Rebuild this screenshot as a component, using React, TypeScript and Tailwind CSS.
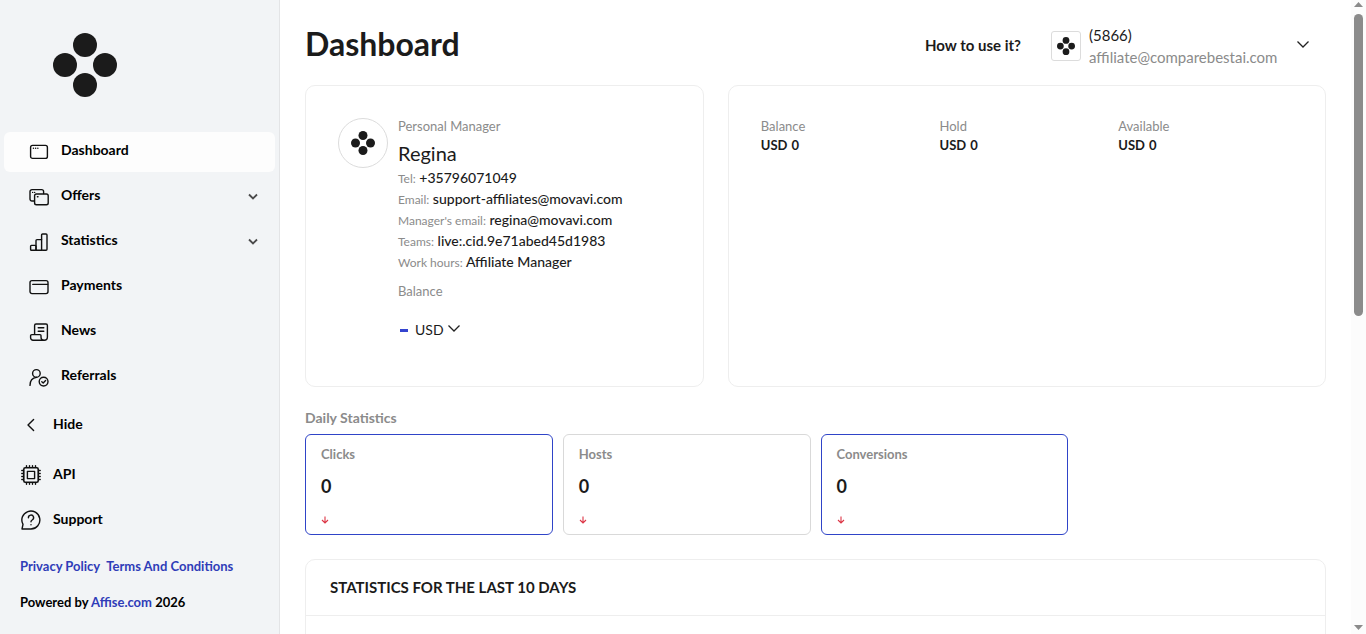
import React from 'react';

interface NavItem {
  label: string;
  icon: React.ReactNode;
  active?: boolean;
  expandable?: boolean;
}

interface StatCard {
  label: string;
  value: number;
  selected: boolean;
}

const Icon: React.FC<{ children: React.ReactNode }> = ({ children }) => (
  <svg
    width="20"
    height="20"
    viewBox="0 0 20 20"
    fill="none"
    stroke="#111111"
    strokeWidth="1.4"
    strokeLinecap="round"
    strokeLinejoin="round"
    aria-hidden="true"
    className="shrink-0"
  >
    {children}
  </svg>
);

const navItems: NavItem[] = [
  {
    label: 'Dashboard',
    active: true,
    icon: (
      <>
        <rect x="1.6" y="3.4" width="16.8" height="13" rx="2" />
        <path d="M4.4 6.2h.1M6.6 6.2h.1M8.8 6.2h.1" />
      </>
    ),
  },
  {
    label: 'Offers',
    expandable: true,
    icon: (
      <>
        <path d="M5.2 14H3a2 2 0 0 1-2-2V4.6a2 2 0 0 1 2-2h9.600a2 2 0 0 1 2 2v2" />
        <rect x="5.6" y="7" width="13.600" height="10.800" rx="1.8" />
        <path d="M3.6 5.400h.1M5.6 5.400h.1M8.400 9.8h.6" />
      </>
    ),
  },
  {
    label: 'Statistics',
    expandable: true,
    icon: (
      <>
        <rect x="1.6" y="13.4" width="5.4" height="4.8" rx=".8" />
        <path d="M7 18.2V8.6a1 1 0 0 1 1-1h4.6M7 18.2h5.6" />
        <rect x="12.6" y="2" width="5.4" height="16.2" rx="1" />
      </>
    ),
  },
  {
    label: 'Payments',
    icon: (
      <>
        <rect x="1" y="3.6" width="18" height="13" rx="2" />
        <path d="M3.8 7.4h14.8" />
      </>
    ),
  },
  {
    label: 'News',
    icon: (
      <>
        <path d="M5.6 12.6V3.4A1.4 1.4 0 0 1 7 2h10a1.400 1.400 0 0 1 1.400 1.400V15a3.200 3.200 0 0 1-3.200 3.200H4a2.400 2.400 0 0 1-2.400-2.400v-2a1.200 1.200 0 0 1 1.200-1.200H11a1 1 0 0 1 1 1V15a3.200 3.200 0 0 0 3.200 3.200" />
        <path d="M9.200 5.800h5.600M9.200 9.200h5.600" />
      </>
    ),
  },
  {
    label: 'Referrals',
    icon: (
      <>
        <circle cx="7.400" cy="6.400" r="3.800" />
        <path d="M1 18.400c0-4.600 2.600-7.600 6.600-8" />
        <circle cx="14.600" cy="14.600" r="4.400" />
        <path d="m12.800 14.800 1.400 1.200 2.400-2.400" />
      </>
    ),
  },
];

const contacts = [
  { label: 'Tel:', value: '+35796071049' },
  { label: 'Email:', value: 'support-affiliates@movavi.com' },
  { label: "Manager's email:", value: 'regina@movavi.com' },
  { label: 'Teams:', value: 'live:.cid.9e71abed45d1983' },
  { label: 'Work hours:', value: 'Affiliate Manager' },
];

const balances = ['Balance', 'Hold', 'Available'];

const stats: StatCard[] = [
  { label: 'Clicks', value: 0, selected: true },
  { label: 'Hosts', value: 0, selected: false },
  { label: 'Conversions', value: 0, selected: true },
];

const Logo: React.FC<{ size: number }> = ({ size }) => (
  <svg width={size} height={size} viewBox="0 0 64 64" fill="#1b1b1b" role="img" aria-label="Logo">
    <circle cx="32" cy="12" r="12" />
    <circle cx="12" cy="32" r="12" />
    <circle cx="52" cy="32" r="12" />
    <circle cx="32" cy="52" r="12" />
  </svg>
);

const Chevron: React.FC = () => (
  <svg width="14" height="14" viewBox="0 0 14 14" fill="none" stroke="#222222" strokeWidth="1.3" aria-hidden="true">
    <path d="m1.500 4.500 5.500 5.500 5.500-5.500" />
  </svg>
);

const Sidebar: React.FC = () => (
  <aside className="w-[280px] shrink-0 border-r border-[#e3e4e6] bg-[#f2f4f6] text-black">
    <div className="h-[132px] pl-[53px] pt-[33px]">
      <Logo size={64} />
    </div>

    <nav className="flex flex-col gap-[5px] px-1 text-sm font-bold">
      {navItems.map((item) => (
        <a
          key={item.label}
          href="#"
          className={`flex h-10 items-center rounded-md pb-px pl-[25px] pr-4 ${item.active ? 'bg-[#fdfdfd]' : ''}`}
        >
          <Icon>{item.icon}</Icon>
          <span className="ml-3 flex-1 pb-[3px]">{item.label}</span>
          {item.expandable && (
            <svg width="12" height="12" viewBox="0 0 12 12" fill="none" stroke="#4b4b4b" strokeWidth="1.8" aria-hidden="true">
              <path d="m2 3.500 4 4 4-4" />
            </svg>
          )}
        </a>
      ))}
    </nav>

    <div className="mt-2 flex flex-col pl-[21px] text-sm font-bold">
      <button type="button" className="flex h-10 items-center gap-3 text-left">
        <Icon>
          <path d="M12.600 4.400 7 10l5.600 5.600" />
        </Icon>
        <span className="pb-[2px]">Hide</span>
      </button>
      <a href="#" className="mt-[10px] flex h-10 items-center gap-3">
        <Icon>
          <rect x="2.800" y="2.800" width="14.400" height="14.400" rx="1.400" strokeWidth="1.600" />
          <rect x="6.400" y="6.400" width="7.200" height="7.200" />
          <path d="M5.500 2V.8M8.500 2V.8M11.500 2V.8M14.500 2V.8M5.500 19.200V18M8.500 19.200V18M11.500 19.200V18M14.500 19.200V18M2 5.500H.8M2 8.500H.8M2 11.500H.8M2 14.500H.8M19.200 5.500H18M19.200 8.500H18M19.200 11.500H18M19.200 14.500H18" />
        </Icon>
        <span className="pb-[2px]">API</span>
      </a>
      <a href="#" className="mt-[5px] flex h-10 items-center gap-3">
        <Icon>
          <path d="M1 19l1-4.600A9 9 0 1 1 10 19z" />
          <path d="M7.400 7.800A2.600 2.600 0 1 1 11.200 10c-.8.500-1.200 1-1.200 1.800M10 14.600v.2" />
        </Icon>
        <span className="pb-[2px]">Support</span>
      </a>
    </div>

    <div className="mt-4 pl-5 text-[13px] font-bold leading-5">
      <p className="flex gap-[6px] text-[#2f3cb8]">
        <a href="#">Privacy Policy</a>
        <a href="#">Terms And Conditions</a>
      </p>
      <p className="mt-4">
        Powered by{' '}
        <a href="#" className="text-[#2f3cb8]">
          Affise.com
        </a>{' '}
        2026
      </p>
    </div>
  </aside>
);

const Header: React.FC = () => (
  <header className="flex h-[85px] items-center pt-[6px]">
    <h1 className="flex-1 pb-1 text-[32px] font-bold">Dashboard</h1>
    <a href="#" className="mr-[30px] text-[15px] font-bold">
      How to use it?
    </a>
    <span className="flex size-[30px] items-center justify-center rounded-[3px] border border-[#dcdcdc]">
      <Logo size={18} />
    </span>
    <div className="ml-2 min-w-[196px] text-[15px] leading-[22px]">
      <p>(5866)</p>
      <p className="text-[#8b8b8b]">affiliate@comparebestai.com</p>
    </div>
    <button type="button" aria-label="Account menu" className="ml-[11px] mr-4 pb-1">
      <Chevron />
    </button>
  </header>
);

const ManagerCard: React.FC = () => (
  <section className="flex h-[302px] gap-[10px] rounded-[10px] border border-[#eeeeee] p-8">
    <span className="flex size-[50px] shrink-0 items-center justify-center rounded-full border border-[#dcdcdc]">
      <Logo size={24} />
    </span>
    <div>
      <p className="text-[13px] leading-4 text-[#8b8b8b]">Personal Manager</p>
      <h2 className="mt-[5px] text-xl leading-7">Regina</h2>
      <ul>
        {contacts.map((contact) => (
          <li key={contact.label} className="text-sm font-medium leading-[21px]">
            <span className="text-xs font-normal text-[#8b8b8b]">{contact.label}</span> {contact.value}
          </li>
        ))}
      </ul>
      <p className="mt-[10px] text-[13px] leading-[18px] text-[#8b8b8b]">Balance</p>
      <button type="button" className="mt-5 flex items-center text-sm leading-5">
        <span className="ml-[2px] mr-[7px] h-[3px] w-2 bg-[#3444cf]" />
        <span className="mr-[3px]">USD</span>
        <span className="pb-1">
          <Chevron />
        </span>
      </button>
    </div>
  </section>
);

const BalanceCard: React.FC = () => (
  <section className="grid h-[302px] grid-cols-3 rounded-[10px] border border-[#eeeeee] pl-8 pr-7 pt-8 text-[13px]">
    {balances.map((label) => (
      <div key={label}>
        <p className="leading-4 text-[#8b8b8b]">{label}</p>
        <p className="flex gap-1 font-bold leading-[22px]">
          <span>USD</span>
          <span>0</span>
        </p>
      </div>
    ))}
  </section>
);

const DailyStats: React.FC = () => (
  <section>
    <h2 className="mt-[21px] text-sm font-bold leading-5 text-[#8b8b8b]">Daily Statistics</h2>
    <div className="mt-[6px] grid grid-cols-4 gap-[10px]">
      {stats.map((stat) => (
        <button
          key={stat.label}
          type="button"
          className={`h-[101px] rounded-md border px-[15px] pb-[2px] text-left ${
            stat.selected ? 'border-[#2f44c8]' : 'border-[#d9d9d9]'
          }`}
        >
          <span className="block text-[13px] font-bold leading-5 text-[#8b8b8b]">{stat.label}</span>
          <span className="mt-2 block text-lg font-bold leading-7">{stat.value}</span>
          <svg
            width="8"
            height="8"
            viewBox="0 0 8 8"
            fill="none"
            stroke="#dc3545"
            strokeWidth="1.1"
            aria-hidden="true"
            className="mt-4"
          >
            <path d="M4 .5v6.500M1 4l3 3 3-3" />
          </svg>
        </button>
      ))}
    </div>
  </section>
);

const ScrollRail: React.FC = () => (
  <div className="flex w-[15px] shrink-0 flex-col items-center bg-[#fcfcfc] pb-1 pt-[2px]" aria-hidden="true">
    <svg width="9" height="5" viewBox="0 0 9 5" fill="#8b8b8b" className="mb-[7px]">
      <path d="M4.500 0 9 5H0z" />
    </svg>
    <div className="h-[302px] w-[9px] rounded-full bg-[#8b8b8b]" />
    <svg width="9" height="5" viewBox="0 0 9 5" fill="#8b8b8b" className="mt-auto">
      <path d="M4.500 5 0 0h9z" />
    </svg>
  </div>
);

const App: React.FC = () => {
  return (
    <div className="flex h-screen overflow-hidden bg-white font-['Lato',sans-serif] text-[#1b1b1b]">
      <Sidebar />
      <main className="min-w-0 flex-1 overflow-hidden px-[25px]">
        <Header />
        <div className="grid grid-cols-[2fr_3fr] gap-6">
          <ManagerCard />
          <BalanceCard />
        </div>
        <DailyStats />
        <section className="mt-6 h-[400px] rounded-[10px] border border-[#eeeeee]">
          <h2 className="border-b border-[#eeeeee] px-6 py-4 text-[15px] font-bold leading-[23px]">
            STATISTICS FOR THE LAST 10 DAYS
          </h2>
        </section>
      </main>
      <ScrollRail />
    </div>
  );
};

export default App;
